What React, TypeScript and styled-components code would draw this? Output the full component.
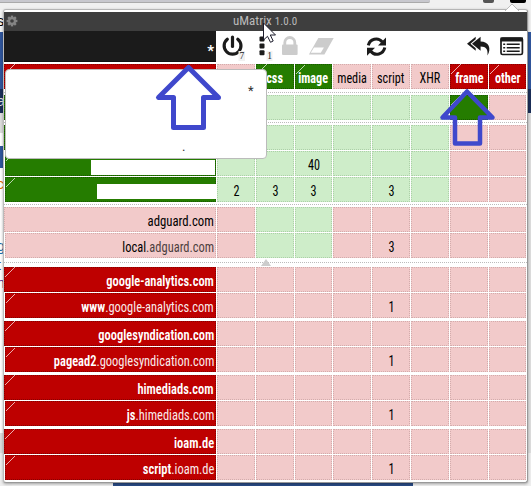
import React from 'react';
import styled, { createGlobalStyle, css } from 'styled-components';

const Global = createGlobalStyle`
  * { box-sizing: border-box; }
  html, body { margin: 0; padding: 0; }
  body { width: 531px; height: 486px; overflow: hidden; font-family: "Roboto Condensed", Roboto, sans-serif; font-size: 14px; color: #000; }
`;

type Tone = 'pink' | 'mint' | 'red' | 'green';
const fills: Record<Tone, string> = { pink: '#f2caca', mint: '#ceedc9', red: '#be0000', green: '#257c00' };
const edges: Record<Tone, string> = { pink: '#d3acac', mint: '#acd0a8', red: '#870000', green: '#175800' };

const Page = styled.div`
  position: relative; width: 531px; height: 486px; overflow: hidden; background: #f0f0f0;
`;
const Backdrop = styled.div`position: absolute; inset: 0; display: flex; justify-content: space-between;`;
const Strip = styled.div<{ $w: number }>`display: flex; flex-direction: column; width: ${p => p.$w}px; overflow: hidden;`;
const Band = styled.div<{ $h: number; $c: string; $ink?: string }>`
  flex: none; height: ${p => p.$h}px; background: ${p => p.$c}; color: ${p => p.$ink || '#000'};
  font: 14px/${p => p.$h}px "Liberation Sans", sans-serif; text-indent: -3px; white-space: nowrap; overflow: hidden;
`;
const BrowserBar = styled.div`
  position: absolute; left: 0; top: 0; width: 531px; height: 10px; background: #f0f0f0; overflow: hidden;
`;
const AddressField = styled.div`width: 430px; height: 3px; background: #c8c8ce; border-bottom: 1px solid #aaa; border-bottom-right-radius: 2px;`;
const Extension = styled.div<{ $x: number; $w: number; $c: string }>`
  position: absolute; left: ${p => p.$x}px; top: 0; width: ${p => p.$w}px; height: 3px; background: ${p => p.$c}; border-radius: 0 0 2px 2px;
`;
const FooterBand = styled.div`position: absolute; left: 113px; top: 483px; width: 300px; height: 3px; background: #294b85;`;

const Popup = styled.main`
  position: absolute; left: 3px; top: 9px; width: 525px; height: 474px; background: #fff;
  border: 1px solid #bbb; border-top-color: #b5b5b5; border-right-color: #999; border-bottom-color: #999; border-radius: 3px;
  padding-top: 2px; box-shadow: 0 1px 3px #0005;
`;
const Notch = styled.svg`position: absolute; left: 505px; top: 3px; width: 14px; height: 8px;`;
const TitleBar = styled.header`
  height: 19px; background: #3e3e3e; color: #bbb; display: flex; align-items: center; padding-left: 2px;
  > svg { flex: none; margin-top: -1px; }
`;
const Title = styled.h1`
  margin: -1px 0 0 215px; font-size: 13px; font-weight: 400; line-height: 17px; width: 100px; white-space: nowrap;
  small { font-size: 11px; letter-spacing: 0.1px; }
`;
const Toolbar = styled.div`height: 33px; display: flex;`;
const Scope = styled.div`
  width: 212px; height: 31px; background: #1b1b1b; color: #fff; font-size: 15px; font-weight: 700; text-align: right;
  padding: 10px 2px 0 0; line-height: 20px; border-bottom: 1px solid #111;
`;
const Tools = styled.svg`width: 311px; height: 33px;`;
const Matrix = styled.div`display: flex; flex-direction: column;`;
const Row = styled.div<{ $after?: number }>`
  display: grid; grid-template-columns: 212px 38px 38px 37px 38px 38px 38px 38px 37px; column-gap: 1px; height: 25px;
  margin-bottom: ${p => p.$after ?? 1}px;
`;
const Divider = styled.div<{ $before: number; $after: number }>`
  height: 1px; margin: ${p => p.$before}px 0 ${p => p.$after}px; background: repeating-linear-gradient(90deg, #bbb 0 1px, #fff 1px 2px);
  position: relative;
`;
const Collapse = styled.svg`position: absolute; left: 257px; top: -3px; width: 10px; height: 7px;`;
const slash = css`
  background-origin: border-box;
  background-image: linear-gradient(135deg, transparent 7.3px, #ffffffb0 7.5px, #ffffffb0 8.1px, transparent 8.4px);
`;
const Cell = styled.div<{ $tone: Tone }>`
  background-color: ${p => fills[p.$tone]}; border: 1px dotted ${p => edges[p.$tone]};
  color: ${p => (p.$tone === 'red' || p.$tone === 'green' ? '#fff' : '#000')};
  font-weight: ${p => (p.$tone === 'red' || p.$tone === 'green' ? 700 : 400)};
  display: flex; justify-content: center; line-height: 26px; min-width: 0; height: 25px; white-space: nowrap;
  ${p => (p.$tone === 'red' || p.$tone === 'green') && slash}
`;
const HostCell = styled(Cell)<{ $sub?: boolean }>`
  justify-content: flex-end; padding-right: 1px; margin-left: ${p => (p.$sub ? 1 : 0)}px; font-weight: 400;
`;
const Condensed = styled.span<{ $w?: number; $right?: boolean }>`
  display: block; transform: scaleX(${p => p.$w ?? 0.87}); transform-origin: ${p => (p.$right ? 'right' : 'center')};
  b { font-weight: 600; }
`;
const Parent = styled.span<{ $dim: boolean }>`opacity: ${p => (p.$dim ? 0.7 : 0.92)};`;
const Blank = styled.div<{ $w: number; $y: number; $r: number }>`
  flex: none; width: ${p => p.$w}px; height: 15px; background: #fff; margin: ${p => p.$y}px ${p => p.$r}px 0 0;
`;
const Tooltip = styled.div`
  position: absolute; left: 5px; top: 69px; width: 262px; height: 90px; background: #fff; border: 1px solid #bbb; border-radius: 4px;
`;
const Mark = styled.span<{ $x: number; $y: number }>`
  position: absolute; left: ${p => p.$x}px; top: ${p => p.$y}px; line-height: 16px; color: #333; font-size: 13px;
`;
const Overlay = styled.svg`position: absolute; inset: 0; width: 531px; height: 486px;`;

function Host({ head = '', tail = '', tone, sub }: { head?: string; tail?: string; tone: Tone; sub?: boolean }) {
  const strong = tone === 'red' || tone === 'green';
  return (
    <HostCell $tone={tone} $sub={sub}>
      <Condensed $right $w={tail ? 0.89 : strong ? 0.89 : 0.91}>{strong ? <b>{head}</b> : head}{tail && <Parent $dim={!strong}>{tail}</Parent>}</Condensed>
    </HostCell>
  );
}

const tones: Record<string, Tone> = { p: 'pink', m: 'mint', r: 'red', g: 'green' };
function Cells({ pattern, values = [] }: { pattern: string; values?: string[] }) {
  return <>{pattern.split('').map((t, i) => <Cell key={i} $tone={tones[t]}>{values[i] && <Condensed>{values[i]}</Condensed>}</Cell>)}</>;
}

const blocked = [
  ['google-analytics.com', 'www', '.google-analytics.com'],
  ['googlesyndication.com', 'pagead2', '.googlesyndication.com'],
  ['himediads.com', 'js', '.himediads.com'],
  ['ioam.de', 'script', '.ioam.de'],
];

const Gear = () => (
  <svg width="12" height="12" viewBox="-6 -6 12 12">
    <g fill="#858585">
      {[0, 45, 90, 135].map(a => <rect key={a} x="-1.2" y="-5.4" width="2.4" height="10.8" transform={`rotate(${a})`} />)}
      <circle r="4" />
    </g>
    <circle r="1.8" fill="#3e3e3e" />
  </svg>
);

function ToolIcons() {
  return (
    <Tools viewBox="216 31 311 33">
      <g fill="none" stroke="#1b1b1b" strokeWidth="3.2">
        <path d="M227.3 39.2A8.4 8.4 0 1 0 237.8 39.2" strokeLinecap="round" />
        <path d="M232.5 37v9.5" strokeLinecap="round" />
      </g>
      <g fill="#1b1b1b">
        <rect x="259.500" y="36.5" width="5" height="5" rx="1" /><rect x="259.500" y="43.5" width="5" height="5" rx="1" /><rect x="259.500" y="50.300" width="5" height="5" rx="1" />
      </g>
      <g fill="#f1f1f1"><rect x="238.500" y="51" width="6.500" height="10" /><rect x="266.500" y="51" width="6" height="10" /></g>
      <g fontSize="9.500" fill="#222" fontFamily="Liberation Serif, serif"><text x="239.5" y="59">7</text><text x="267.3" y="59">1</text></g>
      <path d="M284.8 45v-2.5a5 5 0 0 1 10 0V45" fill="none" stroke="#ccc" strokeWidth="2.8" />
      <rect x="282" y="44.5" width="15.6" height="10.5" rx="1" fill="#ccc" />
      <path d="M318.3 38h15.4L324.4 54.5h-15.5z" fill="#ccc" />
      <path d="M314 47.6h9.9l-3.1 5.2h-10z" fill="#fff" />
      <g transform="translate(366.500 37)" fill="none" stroke="#1b1b1b" strokeWidth="3">
        <path d="M1.8 8.4A8 8 0 0 1 15.8 5" /><path d="M18.3 10.6A8 8 0 0 1 4.2 14.2" />
        <path d="M19.5 .5v8h-8zM.5 18.8v-8h8z" fill="#1b1b1b" stroke="none" />
      </g>
      <path d="M475.7 36.7l-8.7 7 8.7 7v-2.5l-5.2-4.5 5.2-4.5zM480.6 36.7l-8.6 7 8.6 7v-4.1c5.5 0 7.7 3.2 6.8 9 4.4-7.3 1.3-14.2-6.8-14.2z" fill="#1b1b1b" />
      <rect x="501" y="38" width="21.4" height="16.5" rx="1.6" fill="none" stroke="#1b1b1b" strokeWidth="1.7" />
      <path d="M500.5 37.5h22.5v4h-22.5z" fill="#1b1b1b" />
      <path d="M503.2 44.3h2M503.2 47.8h2M503.2 51.3h2M506.7 44.3h13M506.7 47.8h13M506.7 51.3h13" stroke="#1b1b1b" strokeWidth="1.6" />
    </Tools>
  );
}

export default function App() {
  return (
    <Page>
      <Global />
      <Backdrop>
        <Strip $w={12}>
          <Band $h={10} $c="#f0f0f0" /><Band $h={22} $c="#f4f4f4">s</Band><Band $h={57} $c="#30559b" $ink="#fff">i</Band>
          <Band $h={24} $c="#1b2e58" $ink="#ddd">a</Band><Band $h={20} $c="#ddd" /><Band $h={13} $c="#fff" /><Band $h={22} $c="#30559b" />
          <Band $h={9} $c="#fff" /><Band $h={14} $c="#fff" $ink="#e36b00">c</Band><Band $h={45} $c="#fff" />
          <Band $h={20} $c="#fff" $ink="#176ca8">g</Band><Band $h={18} $c="#fff" $ink="#234b78">t</Band><Band $h={19} $c="#fff" $ink="#552589">n</Band>
          <Band $h={140} $c="#fff" /><Band $h={20} $c="#ddd" /><Band $h={40} $c="#eee" />
        </Strip>
        <Strip $w={8}>
          <Band $h={32} $c="#f0f0f0" /><Band $h={57} $c="#30559b" /><Band $h={24} $c="#1b2e58" /><Band $h={340} $c="#ddd" /><Band $h={40} $c="#eee" />
        </Strip>
      </Backdrop>
      <BrowserBar><AddressField /><Extension $x={483} $w={11} $c="#555" /><Extension $x={510} $w={16} $c="#000" /></BrowserBar>
      <FooterBand />
      <Popup>
        <TitleBar><Gear /><Title>uMatrix <small>1.0.0</small></Title></TitleBar>
        <Toolbar><Scope>*</Scope><ToolIcons /></Toolbar>
        <Matrix>
          <Row $after={0}><Host tone="red" /><Cells pattern="pggppprr" values={['', 'css', 'image', 'media', 'script', 'XHR', 'frame', 'other']} /></Row>
          <Divider $before={3} $after={2} />
          <Row $after={0}><Host tone="green" /><Cells pattern="mmmmmmgp" /></Row>
          <Divider $before={2} $after={2} />
          <Row><Host tone="green" /><Cells pattern="mmmmmmpp" /></Row>
          <Row><HostCell $tone="green" $sub><Blank $w={124} $y={8} $r={-1} /></HostCell><Cells pattern="mmmmmmpp" values={['', '', '40']} /></Row>
          <Row $after={0}><HostCell $tone="green" $sub><Blank $w={119} $y={6} $r={-2} /></HostCell><Cells pattern="mmmmmmpp" values={['2', '3', '3', '', '3']} /></Row>
          <Divider $before={2} $after={2} />
          <Row><Host tone="pink" head="adguard.com" /><Cells pattern="pmmppppp" /></Row>
          <Row $after={0}><Host tone="pink" sub head="local" tail=".adguard.com" /><Cells pattern="pmmppppp" values={['', '', '', '', '3']} /></Row>
          <Divider $before={4} $after={4}><Collapse><path d="M0 7 5 0l5 7z" fill="#ccc" /></Collapse></Divider>
          {blocked.map(([domain, host, tail]) => (
            <React.Fragment key={domain}>
              <Row><Host tone="red" head={domain} /><Cells pattern="pppppppp" /></Row>
              <Row $after={3}><Host tone="red" sub head={host} tail={tail} /><Cells pattern="pppppppp" values={['', '', '', '', '1']} /></Row>
            </React.Fragment>
          ))}
        </Matrix>
      </Popup>
      <Notch viewBox="0 0 14 8"><path d="M0 8 7 1l7 7" fill="#fff" stroke="#bbb" /></Notch>
      <Tooltip><Mark $x={242} $y={13}>*</Mark><Mark $x={176} $y={69}>.</Mark></Tooltip>
      <Overlay>
        <g fill="none" stroke="#3f48cc" strokeWidth="5" strokeLinejoin="round">
          <path d="M188.5 67.5 158.500 97.5h15V127.500h30V97.5H218.500z" />
          <path d="M467 91.500 442.500 117.500h12.500V143.500h25v-26h12.500z" strokeWidth="4.5" />
        </g>
        <path d="M263.500 23v17l4-3.700 3 6 2.700-1.300-2.900-6h5.200z" fill="#fff" stroke="#1b1b2b" />
      </Overlay>
    </Page>
  );
}
